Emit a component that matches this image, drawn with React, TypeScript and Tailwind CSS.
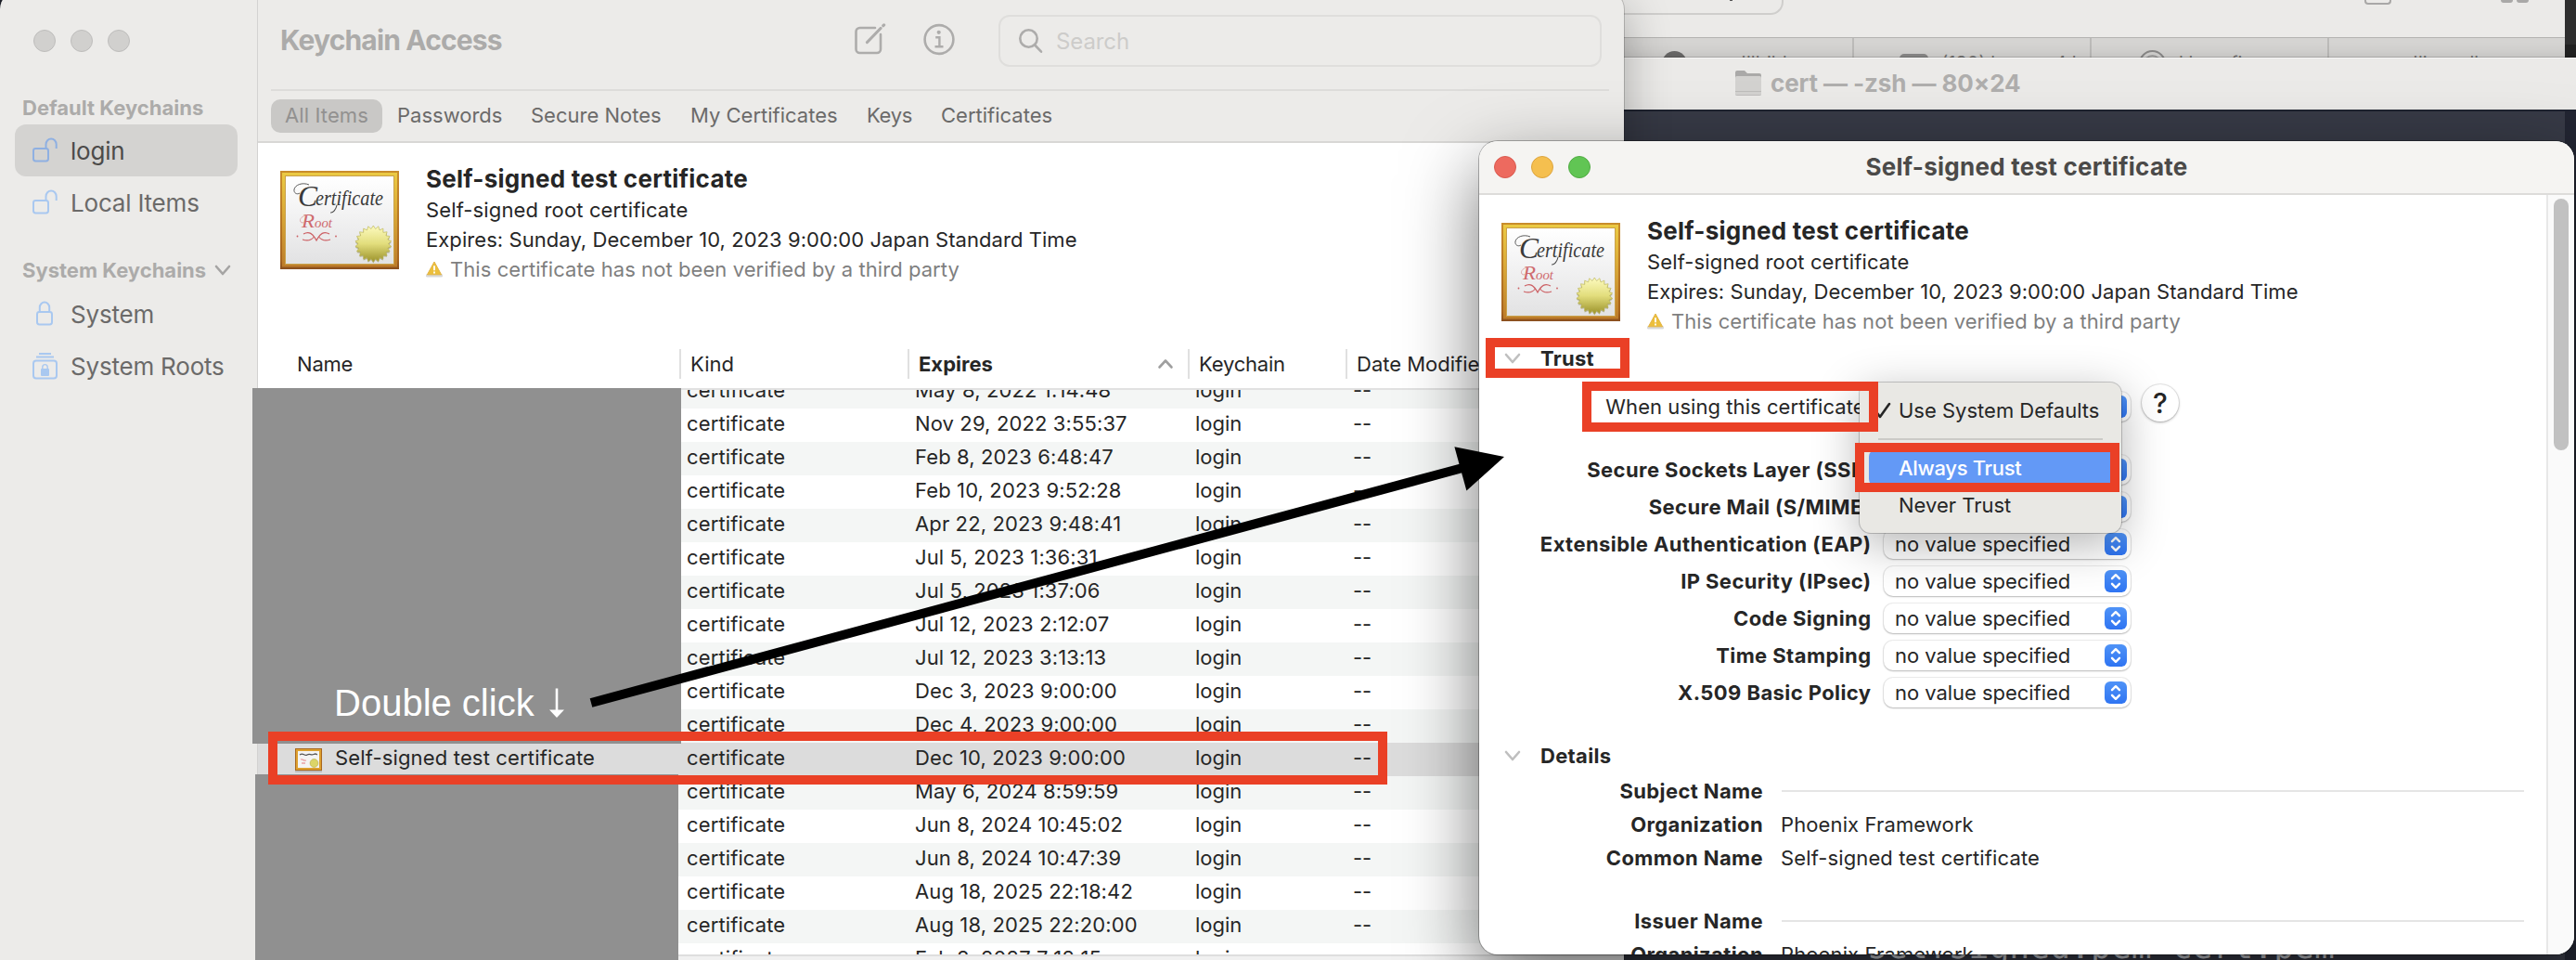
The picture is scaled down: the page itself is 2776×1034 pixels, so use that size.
import React from 'react';

const ROWS = [
  'May 8, 2022 1:14:48',
  'Nov 29, 2022 3:55:37',
  'Feb 8, 2023 6:48:47',
  'Feb 10, 2023 9:52:28',
  'Apr 22, 2023 9:48:41',
  'Jul 5, 2023 1:36:31',
  'Jul 5, 2023 1:37:06',
  'Jul 12, 2023 2:12:07',
  'Jul 12, 2023 3:13:13',
  'Dec 3, 2023 9:00:00',
  'Dec 4, 2023 9:00:00',
  'Dec 10, 2023 9:00:00',
  'May 6, 2024 8:59:59',
  'Jun 8, 2024 10:45:02',
  'Jun 8, 2024 10:47:39',
  'Aug 18, 2025 22:18:42',
  'Aug 18, 2025 22:20:00',
  'Feb 8, 2027 7:12:15',
];

const SELECTED = 11;

const POLICIES = [
  'Secure Sockets Layer (SSL)',
  'Secure Mail (S/MIME)',
  'Extensible Authentication (EAP)',
  'IP Security (IPsec)',
  'Code Signing',
  'Time Stamping',
  'X.509 Basic Policy',
];

/* Points of the serrated seal in the certificate artwork. */
const SEAL = Array.from({ length: 44 }, (_, i) => {
  const r = i % 2 === 0 ? 19.6 : 16.2;
  const a = (i / 44) * Math.PI * 2 - Math.PI / 2;
  return `${(100.3 + r * Math.cos(a)).toFixed(2)},${(78.6 + r * Math.sin(a)).toFixed(2)}`;
}).join(' ');

function CertificateArt({ id }: { id: string }) {
  return (
    <svg width="128" height="106" viewBox="0 0 128 106" className="shrink-0">
      <defs>
        <linearGradient id={`${id}-edge`} x1="0" y1="0" x2="0" y2="1">
          <stop offset="0" stopColor="#c98d2c" />
          <stop offset="0.9" stopColor="#a8651f" />
          <stop offset="1" stopColor="#8a4f1e" />
        </linearGradient>
        <linearGradient id={`${id}-gold`} x1="0" y1="0" x2="0" y2="1">
          <stop offset="0" stopColor="#ebca43" />
          <stop offset="0.4" stopColor="#dcac38" />
          <stop offset="1" stopColor="#bd7c2a" />
        </linearGradient>
        <linearGradient id={`${id}-paper`} x1="0" y1="0" x2="0" y2="1">
          <stop offset="0" stopColor="#ffffff" />
          <stop offset="1" stopColor="#e2e2e3" />
        </linearGradient>
        <linearGradient id={`${id}-seal`} x1="0" y1="0" x2="0" y2="1">
          <stop offset="0" stopColor="#fdfbc0" />
          <stop offset="0.5" stopColor="#e2dd7c" />
          <stop offset="1" stopColor="#9b922a" />
        </linearGradient>
      </defs>
      <rect width="128" height="106" fill={`url(#${id}-edge)`} />
      <rect x="2" y="2" width="124" height="101.5" fill={`url(#${id}-gold)`} />
      <rect x="5" y="5" width="118" height="96" fill="#c9a24a" />
      <rect x="6" y="6" width="116" height="94" fill={`url(#${id}-paper)`} />
      <text x="19" y="37.500" fontSize="32" fontStyle="italic" fontFamily="Liberation Serif, serif" fill="#3a3a3a" textLength="21" lengthAdjust="spacingAndGlyphs">C</text>
      <text x="38" y="37" fontSize="23" fontStyle="italic" fontFamily="Liberation Serif, serif" fill="#3a3a3a" textLength="73" lengthAdjust="spacingAndGlyphs">ertificate</text>
      <path d="M31 15c-7-3-15 0-16 5-.6 4 3 6 6 4" fill="none" stroke="#4a4a4a" strokeWidth="0.9" />
      <path d="M61 37c-1 5-4 8-6.500 8" fill="none" stroke="#4a4a4a" strokeWidth="1.100" strokeLinecap="round" />
      <text x="23" y="61" fontSize="20" fontStyle="italic" fontFamily="Liberation Serif, serif" fill="#cf6a6d" textLength="14" lengthAdjust="spacingAndGlyphs">R</text>
      <text x="37" y="61" fontSize="15" fontStyle="italic" fontFamily="Liberation Serif, serif" fill="#cf6a6d" textLength="19" lengthAdjust="spacingAndGlyphs">oot</text>
      <path d="M29 48c-5 0-9 4-7 7 1 1.500 3 1 3.500 0" fill="none" stroke="#d99a9c" strokeWidth="0.800" />
      <path d="M24 74c6 2 10 0 12-2.500M54 74c-6 2-10 0-12-2.500M25 68c6-3.500 10-.5 14 7 4-7.500 8-10.500 14-7" fill="none" stroke="#cc5f63" strokeWidth="1.200" />
      <circle cx="18.500" cy="70.500" r="0.900" fill="#cc5f63" />
      <circle cx="60" cy="70.500" r="0.900" fill="#cc5f63" />
      <polygon points={SEAL} fill="#77702c" opacity="0.45" transform="translate(0 1.4)" />
      <polygon points={SEAL} fill={`url(#${id}-seal)`} stroke="#b5ae4c" strokeWidth="0.6" />
    </svg>
  );
}

function SmallCertificate() {
  return (
    <svg width="29" height="26" viewBox="0 0 29 26" className="shrink-0">
      <rect y="1" width="29" height="25" fill="#a9a9a9" opacity="0.6" />
      <rect width="29" height="24" fill="#a8681f" />
      <rect x="1" y="1" width="27" height="22" fill="#dda02f" />
      <rect x="3" y="3" width="23" height="18" fill="#f4f4f4" />
      <path d="M5 7c4-3 5 2 8 0s4 1 7-.5 3 .5 4 0" fill="none" stroke="#555" strokeWidth="1.3" />
      <path d="M6 12c2-1 3 2 6 1M7 16h4" fill="none" stroke="#e9a0a4" strokeWidth="1.3" />
      <circle cx="20.5" cy="16" r="4.4" fill="#dcd568" stroke="#b0a83e" strokeWidth="0.6" />
    </svg>
  );
}

function Warning() {
  return (
    <svg width="18" height="18" viewBox="0 0 18 18" className="shrink-0">
      <rect x="0" y="14" width="18" height="3.6" rx="1.4" fill="#d9d9d9" />
      <path d="M9 1 16.6 14.8H1.4Z" fill="#ecbf3b" stroke="#e3b444" strokeWidth="1" strokeLinejoin="round" />
      <path d="M9 5.2v5M9 11.6v1.8" stroke="#fff" strokeWidth="1.8" />
    </svg>
  );
}

function CertificateSummary({ id }: { id: string }) {
  return (
    <div className="flex gap-[29px] text-[22px] leading-[32px] text-[#262626]">
      <div className="pt-[10px]">
        <CertificateArt id={id} />
      </div>
      <div className="whitespace-nowrap">
        <div className="text-[26px] leading-[37px] h-[36px] font-bold tracking-[0.24px]">Self-signed test certificate</div>
        <div className="tracking-[0.14px]">Self-signed root certificate</div>
        <div className="tracking-[0.06px]">Expires: Sunday, December 10, 2023 9:00:00 Japan Standard Time</div>
        <div className="flex items-center gap-[8px] tracking-[0.07px] text-[#7f7f7f]">
          <Warning />
          <span>This certificate has not been verified by a third party</span>
        </div>
      </div>
    </div>
  );
}

function OpenLock({ color }: { color: string }) {
  return (
    <svg width="28" height="28" viewBox="0 0 28 28" fill="none" stroke={color} strokeWidth="2">
      <rect x="2" y="12" width="16" height="13.5" rx="2.4" />
      <path d="M15.5 12V7.5a5.4 5.8 0 0 1 11.2 0V12" />
    </svg>
  );
}

function ClosedLock({ color }: { color: string }) {
  return (
    <svg width="28" height="28" viewBox="0 0 28 28" fill="none" stroke={color} strokeWidth="2">
      <rect x="6" y="12" width="16" height="13.5" rx="2.4" />
      <path d="M8.8 12V7a5.2 5.4 0 0 1 10.4 0v5" />
    </svg>
  );
}

function RootsLock({ color }: { color: string }) {
  return (
    <svg width="28" height="30" viewBox="0 0 28 30" fill="none" stroke={color} strokeWidth="2">
      <path d="M8 2h13M5 5.5h19" strokeWidth="1.8" />
      <rect x="2" y="9.5" width="25" height="19" rx="3" />
      <rect x="10" y="18" width="9" height="8" rx="1" fill={color} stroke="none" />
      <path d="M11.8 18.500v-2a2.700 2.900 0 0 1 5.400 0v2" strokeWidth="1.400" />
    </svg>
  );
}

function Chevron({ className, flip }: { className: string; flip?: boolean }) {
  return (
    <svg width="18" height="12" viewBox="0 0 18 12" fill="none" stroke="currentColor" strokeWidth="2.6" strokeLinecap="round" strokeLinejoin="round" className={className}>
      <path d={flip ? 'M2.500 9.500 9 2.500 15.500 9.500' : 'M2 2l7 8 7-8'} />
    </svg>
  );
}

function SidebarItem({ icon, label, active }: { icon: React.ReactNode; label: string; active?: boolean }) {
  return (
    <div className={`flex h-[56px] w-[240px] items-center rounded-[12px] pl-[18px] text-[26px] tracking-[-0.2px] whitespace-nowrap ${active ? 'bg-[#d4d3d1] text-[#4c4b4a]' : 'text-[#6b6a69]'}`}>
      <span className="w-[42px]">{icon}</span>
      {label}
    </div>
  );
}

function Sidebar() {
  return (
    <div className="h-full w-[278px] border-r border-[#d3d2d1] pt-[32px] pl-[16px]">
      <div className="flex gap-[16px] pl-[20px]">
        {[0, 1, 2].map((i) => (
          <div key={i} className="size-[24px] rounded-full border border-[#bebdbc] bg-[#d1d0ce]" />
        ))}
      </div>
      <div className="mt-[42px] flex h-[36px] items-center pl-[8px] text-[22px] font-bold text-[#acabaa]">Default Keychains</div>
      <SidebarItem icon={<OpenLock color="#8fb0e2" />} label="login" active />
      <SidebarItem icon={<OpenLock color="#a9c8f0" />} label="Local Items" />
      <div className="mt-[27px] flex h-[36px] items-center gap-[9px] pl-[8px] text-[22px] font-bold whitespace-nowrap text-[#acabaa]">
        System Keychains
        <Chevron className="text-[#a5a4a3]" />
      </div>
      <div className="h-[1px]" />
      <SidebarItem icon={<ClosedLock color="#a9c8f0" />} label="System" />
      <SidebarItem icon={<RootsLock color="#a9c8f0" />} label="System Roots" />
    </div>
  );
}

function Toolbar() {
  return (
    <div className="mr-[16px] ml-[14px] flex h-[98px] items-center border-b-2 border-[#dddcda] pb-[8px]">
      <div className="w-[628px] pb-[2px] pl-[10px] text-[30px] font-bold tracking-[-0.84px] text-[#acabaa]">Keychain Access</div>
      <svg width="36" height="36" viewBox="0 0 36 36" fill="none" stroke="#adacab" strokeWidth="2.600" strokeLinecap="round" className="-mt-[3px]">
        <path d="M23 5H6.500A4 4 0 0 0 2.500 9v19a4 4 0 0 0 4 4H25a4 4 0 0 0 4-4V12" />
        <path d="M14.500 20.500 29 5.500M31.800 2.700l.8-.8" strokeWidth="3.200" />
      </svg>
      <svg width="34" height="36" viewBox="0 0 34 36" fill="none" stroke="#adacab" strokeWidth="2.600" className="-mt-[3px] ml-[39px]">
        <circle cx="17" cy="17.500" r="15.400" />
        <circle cx="16.700" cy="9.800" r="2.100" fill="#adacab" stroke="none" />
        <path d="M13.200 15.200h4.200v9.300M12.500 25.300h9" strokeWidth="2.400" />
      </svg>
      <div className="ml-[47px] flex h-[56px] w-[650px] items-center rounded-[12px] border-2 border-[#dfdedc] pl-[20px] text-[24px] text-[#cdccca]">
        <svg width="26" height="28" viewBox="0 0 26 28" fill="none" stroke="#adacab" strokeWidth="2.600" strokeLinecap="round">
          <circle cx="10.500" cy="11.500" r="9.200" />
          <path d="M17.200 18.500 24 25.700" />
        </svg>
        <span className="mt-[2px] ml-[14px] tracking-[-0.1px]">Search</span>
      </div>
    </div>
  );
}

function Tabs() {
  return (
    <div className="flex h-[56px] items-center border-b-2 border-[#d8d7d5] pb-[2px] pl-[14px] text-[22px] whitespace-nowrap text-[#6b6a69]">
      <div className="mt-[1px] flex h-[36px] w-[120px] items-center justify-center rounded-[10px] bg-[#c9c8c6] tracking-[0.1px] text-[#929190]">All Items</div>
      <span className="ml-[16px] w-[144px]">Passwords</span>
      <span className="w-[172px]">Secure Notes</span>
      <span className="w-[190px]">My Certificates</span>
      <span className="w-[80px] tracking-[-0.300px]">Keys</span>
      <span>Certificates</span>
    </div>
  );
}

function Table() {
  return (
    <>
      <div className="grid h-[54px] shrink-0 grid-cols-[454px_246px_302px_170px_1fr] items-center border-b-2 border-[#e1e1e1] text-[22px] leading-[32px] text-[#262626]">
        <div className="pl-[42px] tracking-[-0.200px]">Name</div>
        <div className="border-l-2 border-[#e0e0e0] pl-[10px]">Kind</div>
        <div className="flex items-center justify-between border-l-2 border-[#e0e0e0] pr-[15px] pl-[10px] font-bold">
          Expires
          <Chevron className="text-[#9f9f9f]" flip />
        </div>
        <div className="border-l-2 border-[#e0e0e0] pl-[10px] tracking-[-0.200px]">Keychain</div>
        <div className="border-l-2 border-[#e0e0e0] pl-[10px]">Date Modified</div>
      </div>
      <div className="h-[608px] shrink-0 overflow-hidden">
        <div className="-mt-[16px]">
          {ROWS.map((date, i) => (
            <div
              key={date}
              className={`grid h-[36px] grid-cols-[455px_246px_302px_170px_1fr] text-[22px] leading-[32px] text-[#262626] ${i === SELECTED ? 'bg-[#dcdcdc]' : i % 2 === 0 ? 'bg-[#f4f6f5]' : 'bg-white'}`}
            >
              <div className="flex pl-[40px]">
                {i === SELECTED && (
                  <>
                    <span className="pt-[6px]">
                      <SmallCertificate />
                    </span>
                    <span className="pl-[14px] tracking-[0.160px]">Self-signed test certificate</span>
                  </>
                )}
              </div>
              <div className="pl-[7px] tracking-[0.120px]">certificate</div>
              <div className="pl-[7px] tracking-[0.120px]">{date}</div>
              <div className="pl-[7px]">login</div>
              <div className="pl-[7px]">--</div>
            </div>
          ))}
        </div>
      </div>
      <div className="grow border-t-2 border-[#dedede] bg-[#f0f0f0]" />
    </>
  );
}

function KeychainWindow() {
  return (
    <div className="absolute -top-[10px] left-0 flex h-[1100px] w-[1750px] overflow-hidden rounded-[20px] bg-[#ecebe9] pt-[10px] shadow-[0_0_0_1px_rgba(0,0,0,0.18),0_16px_50px_rgba(0,0,0,0.3)]">
      <Sidebar />
      <div className="flex h-[1034px] w-[1472px] flex-col">
        <Toolbar />
        <Tabs />
        <div className="flex grow flex-col bg-white">
          <div className="h-[212px] shrink-0 pt-[20px] pl-[24px]">
            <CertificateSummary id="main" />
          </div>
          <Table />
        </div>
      </div>
    </div>
  );
}

function BrowserWindow() {
  return (
    <div className="absolute top-0 left-[1740px] flex h-[64px] w-[1036px] bg-[#222222]">
      <div className="w-[1024px] bg-[#ebeae8]">
        <div className="flex h-[41px] items-start border-b border-[#b4b3b1]">
          <div className="h-[16px] w-[182px] rounded-br-[14px] border-r-2 border-b-2 border-[#cfcecc]">
            <div className="ml-[124px] h-[1px] w-[3px] bg-[#555]" />
          </div>
          <div className="ml-[626px] h-[5px] w-[29px] rounded-b-[4px] border-2 border-t-0 border-[#a9a8a7]" />
          <div className="ml-[118px] h-[3px] w-[13px] rounded-b-[3px] bg-[#a9a8a7]" />
          <div className="ml-[4px] h-[3px] w-[13px] rounded-b-[3px] bg-[#a9a8a7]" />
        </div>
        <div className="flex h-[22px] overflow-hidden bg-[#d5d4d2] text-[20px] text-[#777675]">
          <div className="flex h-[54px] w-[258px] items-center border-r-2 border-[#bcbbb9] pl-[51px]">
            <div className="size-[27px] rounded-full bg-[#6b6a69]" />
            <span className="ml-[58px]">'llbild</span>
          </div>
          <div className="flex h-[54px] w-[256px] items-center border-r-2 border-[#bcbbb9] pl-[49px]">
            <div className="h-[20px] w-[31px] rounded-[5px] bg-[#8b8a89]" />
            <span className="ml-[14px]">(130) l</span>
            <span className="ml-[64px]">4 l</span>
          </div>
          <div className="flex h-[54px] w-[256px] items-center border-r-2 border-[#bcbbb9] pl-[51px]">
            <div className="size-[29px] rounded-full border-2 border-[#8b8a89] p-[3px]">
              <div className="size-full rounded-full border-2 border-[#a3a2a1]" />
            </div>
            <span className="ml-[14px]">l l config</span>
          </div>
          <div className="flex h-[54px] items-center pl-[90px]">
            <span>'lic.cc.ll</span>
          </div>
        </div>
      </div>
      <div className="h-[48px] grow bg-[#2e2e2e]" />
    </div>
  );
}

function TerminalWindow() {
  return (
    <div className="absolute top-[62px] left-[1740px] flex h-[972px] w-[1036px] flex-col bg-[#373a46] shadow-[0_0_0_1px_rgba(0,0,0,0.15),0_0_16px_rgba(0,0,0,0.15)]">
      <div className="flex h-[56px] items-center border-t border-[#f7f6f5] bg-[#ebeae8] pb-[3px] pl-[129px] text-[26px] font-bold tracking-[-0.100px] whitespace-nowrap text-[#afaead]">
        <svg width="30" height="30" viewBox="0 0 30 30">
          <path d="M1 4a2 2 0 0 1 2-2h8l3 3h13a2 2 0 0 1 2 2v20a2 2 0 0 1-2 2H3a2 2 0 0 1-2-2Z" fill="#aaa9a8" />
          <rect x="1" y="8" width="28" height="20.500" rx="1.500" fill="#d3d2d0" />
          <path d="M1 24.500h28" stroke="#bdbcba" />
        </svg>
        <span className="ml-[9px]">cert — -zsh — 80×24</span>
      </div>
      <div className="flex grow border-t-2 border-[#1f2330]">
        <div className="flex w-[1024px] flex-col justify-end overflow-hidden">
          <pre className="mb-[2px] ml-[272px] font-['DejaVu_Sans_Mono',monospace] text-[36.400px] leading-[24px] text-[#c9cbd1]">selfsigned.pem cert.pem</pre>
        </div>
        <div className="grow bg-[#222532]" />
      </div>
    </div>
  );
}

function Popup() {
  return (
    <div className="flex h-[32px] w-[266px] items-center justify-between rounded-[10px] bg-white pr-[4px] pl-[12px] shadow-[0_0_0_1px_rgba(0,0,0,0.07),0_1px_2px_rgba(0,0,0,0.22)]">
      <span className="tracking-[-0.040px]">no value specified</span>
      <span className="flex h-[24px] w-[24px] items-center justify-center rounded-[6px] bg-gradient-to-b from-[#4f93f7] to-[#2f74f2]">
        <svg width="12" height="18" viewBox="0 0 12 18" fill="none" stroke="#fff" strokeWidth="2.400" strokeLinecap="round" strokeLinejoin="round">
          <path d="M2 6.200 6 2.200l4 4M2 11.800l4 4 4-4" />
        </svg>
      </span>
    </div>
  );
}

function DetailRow({ label, value }: { label: string; value?: string }) {
  return (
    <div className="flex h-[36px] shrink-0 items-center">
      <span className="w-[306px] text-right font-bold tracking-[0.380px]">{label}</span>
      {value ? <span className="ml-[19px] tracking-[0.120px]">{value}</span> : <span className="ml-[20px] h-[2px] w-[800px] bg-[#e5e5e5]" />}
    </div>
  );
}

function Disclosure({ label }: { label: string }) {
  return (
    <div className="flex h-[36px] shrink-0 items-center pl-[27px]">
      <Chevron className="text-[#bfbfbf]" />
      <span className="ml-[21px] font-bold tracking-[0.300px]">{label}</span>
    </div>
  );
}

function CertificateDialog() {
  return (
    <div className="absolute top-[152px] left-[1594px] flex h-[876px] w-[1180px] flex-col overflow-hidden rounded-[20px] bg-white text-[22px] whitespace-nowrap text-[#262626] shadow-[0_0_0_1px_rgba(0,0,0,0.28),0_30px_80px_rgba(0,0,0,0.55)]">
      <div className="relative flex h-[58px] shrink-0 items-center justify-center border-b-2 border-[#dddcda] bg-[#f5f4f2]">
        <div className="absolute left-[16px] flex gap-[16px]">
          <div className="size-[24px] rounded-full border border-[#d95a50] bg-[#ed6a5f]" />
          <div className="size-[24px] rounded-full border border-[#dca43f] bg-[#f5bf4f]" />
          <div className="size-[24px] rounded-full border border-[#50ab43] bg-[#61c554]" />
        </div>
        <span className="pb-[2px] text-[26px] font-bold tracking-[0.240px] text-[#4b4a49]">Self-signed test certificate</span>
      </div>
      <div className="flex h-[818px]">
        <div className="flex w-[1150px] flex-col">
          <div className="h-[158px] shrink-0 pt-[20px] pl-[24px]">
            <CertificateSummary id="dialog" />
          </div>
          <Disclosure label="Trust" />
          <div className="mt-[14px] flex h-[40px] shrink-0 items-center">
            <span className="w-[422px] text-right tracking-[0.060px]">When using this certificate:</span>
            <span className="ml-[14px]">
              <Popup />
            </span>
            <span className="-mt-[8px] ml-[12px] flex size-[40px] items-center justify-center rounded-full bg-white text-[30px] font-medium shadow-[0_0_0_1px_rgba(0,0,0,0.08),0_1px_3px_rgba(0,0,0,0.3)]">?</span>
          </div>
          <div className="mt-[28px] shrink-0">
            {POLICIES.map((policy) => (
              <div key={policy} className="flex h-[40px] items-center">
                <span className="w-[422.500px] text-right font-bold tracking-[0.420px]">{policy}</span>
                <span className="ml-[13.500px]">
                  <Popup />
                </span>
              </div>
            ))}
          </div>
          <div className="h-[30px] shrink-0" />
          <Disclosure label="Details" />
          <div className="h-[2px] shrink-0" />
          <DetailRow label="Subject Name" />
          <DetailRow label="Organization" value="Phoenix Framework" />
          <DetailRow label="Common Name" value="Self-signed test certificate" />
          <div className="h-[32px] shrink-0" />
          <DetailRow label="Issuer Name" />
          <DetailRow label="Organization" value="Phoenix Framework" />
        </div>
        <div className="w-[30px] border-l-2 border-[#e8e8e8] bg-[#fafafa] pt-[4px] pl-[6px]">
          <div className="h-[271px] w-[16px] rounded-full bg-[#c1c1c1]" />
        </div>
      </div>
    </div>
  );
}

function TrustMenu() {
  return (
    <div className="absolute top-[412px] left-[2004px] flex h-[162px] w-[282px] flex-col rounded-[12px] bg-[#e9e8e4] px-[10px] text-[22px] whitespace-nowrap text-[#262626] shadow-[0_0_0_1px_rgba(0,0,0,0.2),0_12px_50px_rgba(0,0,0,0.3)]">
      <div className="mt-[10px] flex h-[40px] items-center">
        <svg width="24" height="22" viewBox="0 0 24 22" fill="none" stroke="#262626" strokeWidth="2.600" strokeLinecap="round" strokeLinejoin="round">
          <path d="M7.500 12l4.500 6L22 4" />
        </svg>
        <span className="ml-[8px]">Use System Defaults</span>
      </div>
      <div className="mx-[10px] mt-[10px] h-[2px] shrink-0 bg-[#cbcac7]" />
      <div className="mt-[10px] flex h-[40px] items-center rounded-[8px] bg-[#6399f6] pl-[32px] font-medium tracking-[-0.300px] text-white">Always Trust</div>
      <div className="flex h-[40px] items-center pl-[32px]">Never Trust</div>
    </div>
  );
}

/* Callouts drawn over the windows. */
function Annotations() {
  return (
    <>
      <div className="absolute top-[418px] left-[272px] flex h-[383px] w-[462px] items-end bg-[#909090] pb-[21px] pl-[88px] text-white">
        <div className="flex items-center gap-[15px] font-['Liberation_Sans',sans-serif] text-[40px] leading-[46px]">
          Double click
          <svg width="18" height="34" viewBox="0 0 18 34" fill="white">
            <path d="M7.700 1.500h2.600v23H17L9 33 1 24.500h6.700Z" />
          </svg>
        </div>
      </div>
      <div className="absolute top-[834px] left-[275px] h-[200px] w-[456px] bg-[#909090]" />
      <div className="absolute top-[788px] left-[289px] h-[57px] w-[1206px] border-[10px] border-[#ea4026]" />
      <svg width="1000" height="300" viewBox="0 0 1000 300" className="absolute top-[470px] left-[630px]">
        <path d="M7 287 946 34" stroke="#000" strokeWidth="10" />
        <path d="M991 22 937.400 11.300 950.400 58.600Z" fill="#000" />
      </svg>
      <div className="absolute top-[364px] left-[1601px] h-[43px] w-[155px] border-[10px] border-[#ea4026]" />
      <div className="absolute top-[411px] left-[1705px] h-[54px] w-[319px] border-[10px] border-[#ea4026]" />
      <div className="absolute top-[477px] left-[1999px] h-[53px] w-[285px] border-[10px] border-[#ea4026]" />
    </>
  );
}

export default function App() {
  return (
    <div className="relative h-[1034px] w-[2776px] overflow-hidden bg-[#20222d] font-['Inter',sans-serif]">
      <BrowserWindow />
      <TerminalWindow />
      <KeychainWindow />
      <CertificateDialog />
      <TrustMenu />
      <Annotations />
    </div>
  );
}
